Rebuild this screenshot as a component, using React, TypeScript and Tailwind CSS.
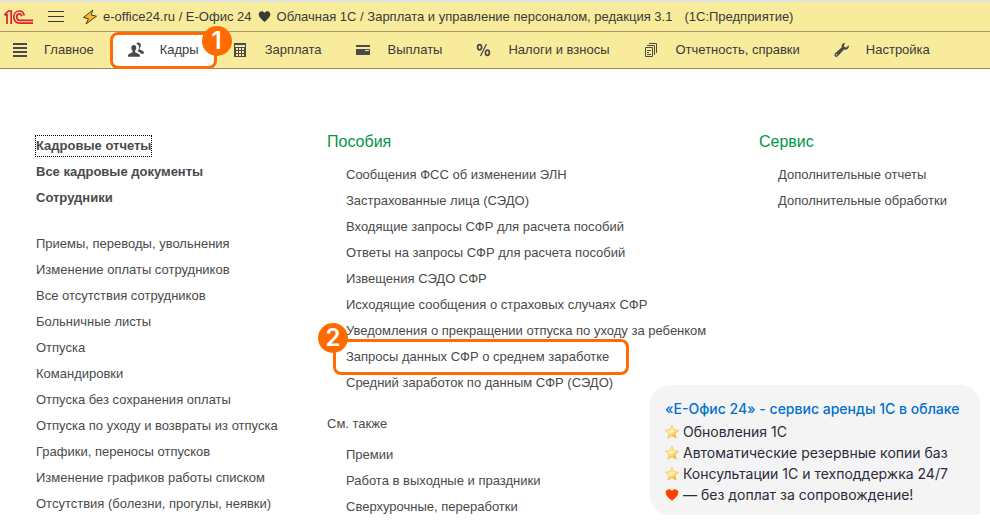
import type { ReactNode } from "react";

type NavItem = { label: string; icon: ReactNode; active?: boolean };

const glyph = "h-4 w-4 shrink-0";

const BarsIcon = () => (
  <svg className={glyph} viewBox="0 0 16 16" fill="#4a4a4a" aria-hidden="true">
    <path d="M1 1h14v2H1zM1 5h14v2H1zM1 9h14v2H1zM1 13h14v2H1z" />
  </svg>
);

const PeopleIcon = () => (
  <svg className={glyph} viewBox="0 0 16 16" fill="#4a4a4a" aria-hidden="true">
    <path d="M8.200 1.800C8.700.7 9.500.4 10.300.4c1.600 0 2.600 1.100 2.500 2.800 0 1.300-.5 2.200-1.100 2.900v1.300l3.200 1.500c.6.300.9.800.9 1.500v1.400h-3c-.3-.9-1-1.400-2.900-2.200V8.700c1-1.200 1.200-2.200 1.100-3.400-.1-1.900-1.100-3-2.800-3.500z" />
    <path d="M5.800 2.900c1.600 0 2.600 1.100 2.500 2.800 0 1.300-.5 2.200-1.200 2.900v1.700l3.700 1.600c.7.300 1 .8 1 1.500v1.400H0v-1.400c0-.7.300-1.200 1-1.500l3.500-1.600V8.600C3.800 7.900 3.300 7 3.300 5.700c-.1-1.700.9-2.800 2.500-2.800z" />
  </svg>
);

const CalculatorIcon = () => (
  <svg className={glyph} viewBox="0 0 16 16" aria-hidden="true">
    <path fill="#4a4a4a" d="M1 1h12v14H1z" />
    <path fill="#f9eb9c" d="M2 3h10v2H2zM3 6h2v2H3zM6 6h2v2H6zM9 6h2v2H9zM3 9h2v2H3zM6 9h2v2H6zM9 9h2v2H9zM3 12h2v2H3zM6 12h2v2H6zM9 12h2v2H9z" />
  </svg>
);

const CardIcon = () => (
  <svg className={glyph} viewBox="0 0 16 16" aria-hidden="true">
    <path fill="#4a4a4a" d="M.5 3h13l.5.5V5H0V3.500zM0 7h14v5.500l-.5.500H.5l-.5-.5z" />
    <path fill="#f9eb9c" d="M9 8h4v1H9z" />
  </svg>
);

const PercentIcon = () => (
  <svg className={glyph} viewBox="0 0 16 16" fill="none" stroke="#4a4a4a" aria-hidden="true">
    <ellipse cx="3.600" cy="5.200" rx="2" ry="2.600" strokeWidth="1.700" />
    <ellipse cx="11.400" cy="10.800" rx="2" ry="2.600" strokeWidth="1.700" />
    <path d="M10.500 2 4.500 14" strokeWidth="1.300" />
  </svg>
);

const PapersIcon = () => (
  <svg className={glyph} viewBox="0 0 16 16" fill="none" stroke="#4a4a4a" aria-hidden="true">
    <path d="M1.500 5.500h7v9h-7zM3 3.500h7.500V13M5 1.500h7.500V11M3 8.500h4M3 10.500h2M3 12.500h4" />
  </svg>
);

const WrenchIcon = () => (
  <svg className={glyph} viewBox="0 0 16 16" aria-hidden="true">
    <path fill="#4a4a4a" d="M11.500 1c-.9-.3-2.100 0-2.900.8-.9.900-1.200 2.200-.8 3.400L1.200 11.300c-1 .9-1.100 2.200-.3 3 .9.900 2.200.8 3.100-.2l6.100-6.500c1.300.5 2.700.2 3.700-.8.900-.9 1.300-2.200.9-3.500l-2.400 2.300-2-.5-.5-1.900z" />
    <circle cx="2.500" cy="12.800" r=".8" fill="#f9eb9c" />
  </svg>
);

const Logo = () => (
  <svg className="h-4 w-8 shrink-0" viewBox="0 0 32 16" fill="none" stroke="#d8232a" role="img" aria-label="1С">
    <path strokeWidth="1.700" d="M.5 5.800H3V15M.5 5.800 4.500 2h2.700v13" />
    <path strokeWidth="1.700" d="M20.300 6.500C19.700 3.700 17.700 2 15.300 2 12 2 9.800 4.700 9.800 8.100c0 3.500 2.500 6.100 5.700 6.100H29" />
    <path strokeWidth="1.700" d="M17.900 7.300c-.4-1.500-1.300-2.400-2.500-2.400-1.700 0-2.700 1.400-2.700 3.200 0 1.900 1.200 3.300 2.900 3.300H29" />
  </svg>
);

const Bolt = () => (
  <svg className="h-4 w-4 shrink-0" viewBox="0 0 16 16" aria-hidden="true">
    <path fill="#fbb92e" stroke="#4a3d22" strokeWidth="1" strokeLinejoin="round" d="M10.800 1 1.500 8.500l5 1.200L4 15 14.500 7.200 9.200 6z" />
  </svg>
);

const Heart = ({ className }: { className: string }) => (
  <svg className={className} viewBox="0 0 14 14" fill="currentColor" aria-hidden="true">
    <path d="M7 12.800C3.500 10 .7 7.600.7 4.700.7 2.700 2.200 1.300 4 1.300c1.300 0 2.400.7 3 1.900.6-1.200 1.700-1.900 3-1.900 1.800 0 3.300 1.400 3.300 3.400 0 2.900-2.800 5.300-6.300 8.100z" />
  </svg>
);

const Star = () => (
  <svg className="h-3.5 w-3.5 shrink-0" viewBox="0 0 14 14" aria-hidden="true">
    <defs>
      <linearGradient id="shine" x1="0" y1="0" x2="0.600" y2="1">
        <stop offset="0" stopColor="#ffd84a" />
        <stop offset="0.550" stopColor="#fff3a0" />
        <stop offset="1" stopColor="#f4ae1e" />
      </linearGradient>
    </defs>
    <path fill="url(#shine)" stroke="#f0b558" strokeWidth=".6" strokeLinejoin="round" d="m7 .4 1.900 4.300 4.800.5-3.500 3.200 1 4.800L7 10.800l-4.200 2.400 1-4.800L.3 5.200l4.800-.5z" />
  </svg>
);

const nav: NavItem[] = [
  { label: "Главное", icon: <BarsIcon /> },
  { label: "Кадры", icon: <PeopleIcon />, active: true },
  { label: "Зарплата", icon: <CalculatorIcon /> },
  { label: "Выплаты", icon: <CardIcon /> },
  { label: "Налоги и взносы", icon: <PercentIcon /> },
  { label: "Отчетность, справки", icon: <PapersIcon /> },
  { label: "Настройка", icon: <WrenchIcon /> },
];

const staffLinks = [
  "Приемы, переводы, увольнения",
  "Изменение оплаты сотрудников",
  "Все отсутствия сотрудников",
  "Больничные листы",
  "Отпуска",
  "Командировки",
  "Отпуска без сохранения оплаты",
  "Отпуска по уходу и возвраты из отпуска",
  "Графики, переносы отпусков",
  "Изменение графиков работы списком",
  "Отсутствия (болезни, прогулы, неявки)",
];

const markedLink = "Запросы данных СФР о среднем заработке";

const benefitLinks = [
  "Сообщения ФСС об изменении ЭЛН",
  "Застрахованные лица (СЭДО)",
  "Входящие запросы СФР для расчета пособий",
  "Ответы на запросы СФР для расчета пособий",
  "Извещения СЭДО СФР",
  "Исходящие сообщения о страховых случаях СФР",
  "Уведомления о прекращении отпуска по уходу за ребенком",
  markedLink,
  "Средний заработок по данным СФР (СЭДО)",
];

const seeAlsoLinks = ["Премии", "Работа в выходные и праздники", "Сверхурочные, переработки"];

const serviceLinks = ["Дополнительные отчеты", "Дополнительные обработки"];

const perks = ["Обновления 1С", "Автоматические резервные копии баз", "Консультации 1С и техподдержка 24/7"];

function Badge({ children, className }: { children: ReactNode; className: string }) {
  return (
    <span className={`absolute z-10 flex h-[30px] w-[30px] items-center justify-center rounded-full bg-[#ff6b00] font-['Inter',sans-serif] text-2xl font-semibold text-white ${className}`}>
      {children}
    </span>
  );
}

function LinkList({ items, className = "" }: { items: string[]; className?: string }) {
  return (
    <ul className={className}>
      {items.map((item) => (
        <li key={item} className="flex h-[26px] items-center">
          {item === markedLink ? (
            <span className="relative">
              <a href="#">{item}</a>
              <span className="pointer-events-none absolute -inset-y-2 -left-[13px] -right-5 rounded-lg border-3 border-[#ff6b00]" />
              <Badge className="-left-7 -top-6">2</Badge>
            </span>
          ) : (
            <a href="#">{item}</a>
          )}
        </li>
      ))}
    </ul>
  );
}

export default function App() {
  return (
    <div className="relative min-h-screen bg-white font-['Liberation_Sans',Arial,sans-serif] text-[13px] leading-5 whitespace-nowrap text-[#4a4a4a]">
      <header className="border-t-2 border-[#e2e2e0] bg-[#f9eb9c] text-[#3a3a3a]">
        <div className="flex h-[30px] items-center border-b border-[#a69d68] pl-1">
          <Logo />
          <button type="button" aria-label="Меню" className="ml-3 flex w-4 flex-col gap-1">
            <span className="h-px bg-[#3a3a3a]" />
            <span className="h-px bg-[#3a3a3a]" />
            <span className="h-px bg-[#3a3a3a]" />
          </button>
          <h1 className="ml-[18px] flex items-center">
            <Bolt />
            <span className="ml-[5px]">e-office24.ru / Е-Офис 24</span>
            <Heart className="mx-1.5 h-[13px] w-[13px]" />
            <span>Облачная 1С / Зарплата и управление персоналом, редакция 3.1</span>
            <span className="ml-3">(1С:Предприятие)</span>
          </h1>
        </div>
        <nav className="flex h-[37px] border-b border-[#8f875a]">
          {nav.map((item) => (
            <div key={item.label} className={item.active ? "relative flex bg-white" : "flex first:-ml-[5px]"}>
              <a href="#" className="flex items-center gap-4 px-[17px]">
                {item.icon}
                {item.label}
              </a>
              {item.active && (
                <>
                  <span className="pointer-events-none absolute -inset-x-px -bottom-px top-0 rounded-lg border-3 border-[#ff6b00]" />
                  <Badge className="-right-4 -top-1.5">1</Badge>
                </>
              )}
            </div>
          ))}
        </nav>
      </header>

      <main className="grid grid-cols-[291px_432px_1fr] pl-9 pt-[60px]">
        <section className="pt-1">
          <ul className="font-bold">
            <li className="flex h-[26px] items-center">
              <a href="#" className="-m-px border border-dotted border-black">Кадровые отчеты</a>
            </li>
            <li className="flex h-[26px] items-center"><a href="#">Все кадровые документы</a></li>
            <li className="flex h-[26px] items-center"><a href="#">Сотрудники</a></li>
          </ul>
          <LinkList items={staffLinks} className="mt-5" />
        </section>

        <section>
          <h2 className="mb-[7px] flex h-[26px] items-center text-base text-[#009646]">Пособия</h2>
          <LinkList items={benefitLinks} className="pl-[19px]" />
          <h3 className="mb-[5px] mt-[15px] flex h-[26px] items-center">См. также</h3>
          <LinkList items={seeAlsoLinks} className="pl-[19px]" />
        </section>

        <section>
          <h2 className="mb-[7px] flex h-[26px] items-center text-base text-[#009646]">Сервис</h2>
          <LinkList items={serviceLinks} className="pl-[19px]" />
        </section>
      </main>

      <aside className="absolute bottom-2.5 right-2.5 w-[330px] rounded-[20px] rounded-br-none bg-[#f4f4f4] px-[15px] pb-2.5 pt-[13px] font-['Inter',sans-serif] text-sm leading-[21px] text-[#2b2b3c]">
        <h2 className="mb-0.5 font-medium text-[#0070cc]">
          <a href="#">«Е-Офис 24» - сервис аренды 1С в облаке</a>
        </h2>
        <ul>
          {perks.map((perk) => (
            <li key={perk} className="flex items-center gap-1">
              <Star />
              {perk}
            </li>
          ))}
          <li className="flex items-center gap-1">
            <Heart className="h-3.5 w-3.5 shrink-0 text-[#ff4000]" />
            — без доплат за сопровождение!
          </li>
        </ul>
      </aside>
    </div>
  );
}
